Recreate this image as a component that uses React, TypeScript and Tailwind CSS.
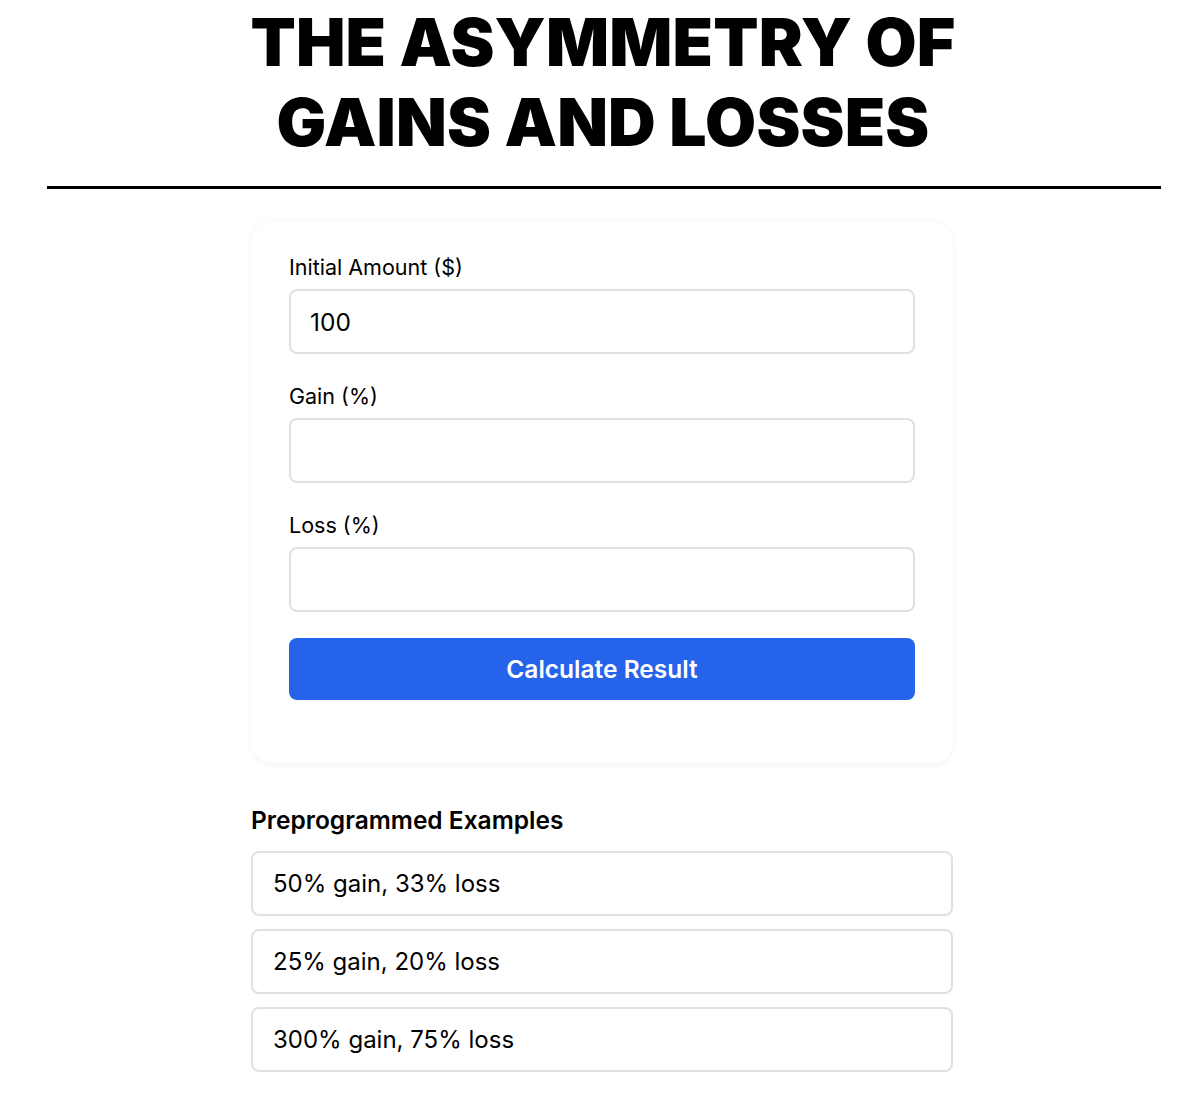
import { useState } from "react";

const examples = [
  { gain: "50", loss: "33", label: "50% gain, 33% loss" },
  { gain: "25", loss: "20", label: "25% gain, 20% loss" },
  { gain: "300", loss: "75", label: "300% gain, 75% loss" },
];

function Field({
  label,
  value,
  onChange,
}: {
  label: string;
  value: string;
  onChange: (v: string) => void;
}) {
  return (
    <div className="flex flex-col">
      <label className="text-[21.5px] leading-[28px] text-black">{label}</label>
      <input
        type="number"
        value={value}
        onChange={(e) => onChange(e.target.value)}
        className="mt-[8px] h-[65px] w-full rounded-[8px] border-2 border-[#e0e0e0] bg-white px-[19px] text-[24.5px] text-black outline-none"
      />
    </div>
  );
}

export default function App() {
  const [amount, setAmount] = useState("100");
  const [gain, setGain] = useState("");
  const [loss, setLoss] = useState("");

  return (
    <div
      className="min-h-screen bg-white text-black"
      style={{ fontFamily: "Inter, 'Noto Sans', sans-serif" }}
    >
      {/* Title */}
      <h1 className="pl-[6px] pt-[2px] text-center text-[66px] font-black uppercase leading-[80px] tracking-[0.2px]">
        The Asymmetry of
        <br />
        Gains and Losses
      </h1>

      <div className="mr-[39px] ml-[47px] mt-[24px] h-[3px] bg-black" />

      <div className="pl-[4px]">
        <div className="mx-auto w-[702px]">
          {/* Calculator card */}
          <div className="mt-[33px] flex flex-col gap-[28px] rounded-[20px] bg-white px-[38px] pt-[31px] pb-[63px] shadow-[0_1px_6px_rgba(0,0,0,0.06)]">
            <Field label="Initial Amount ($)" value={amount} onChange={setAmount} />
            <Field label="Gain (%)" value={gain} onChange={setGain} />
            <Field label="Loss (%)" value={loss} onChange={setLoss} />
            <button className="-mt-[2px] h-[62px] w-full rounded-[8px] bg-[#2563eb] text-[24.5px] font-semibold text-white">
              Calculate Result
            </button>
          </div>

          {/* Examples */}
          <h2 className="mt-[42px] text-[24.5px] font-semibold leading-[30px]">
            Preprogrammed Examples
          </h2>
          <div className="mt-[16px] flex flex-col gap-[13px]">
            {examples.map((ex) => (
              <button
                key={ex.label}
                onClick={() => {
                  setGain(ex.gain);
                  setLoss(ex.loss);
                }}
                className="h-[65px] w-full rounded-[8px] border-2 border-[#e0e0e0] bg-white px-[20px] text-left text-[24px] text-black"
              >
                {ex.label}
              </button>
            ))}
          </div>
        </div>
      </div>
    </div>
  );
}
